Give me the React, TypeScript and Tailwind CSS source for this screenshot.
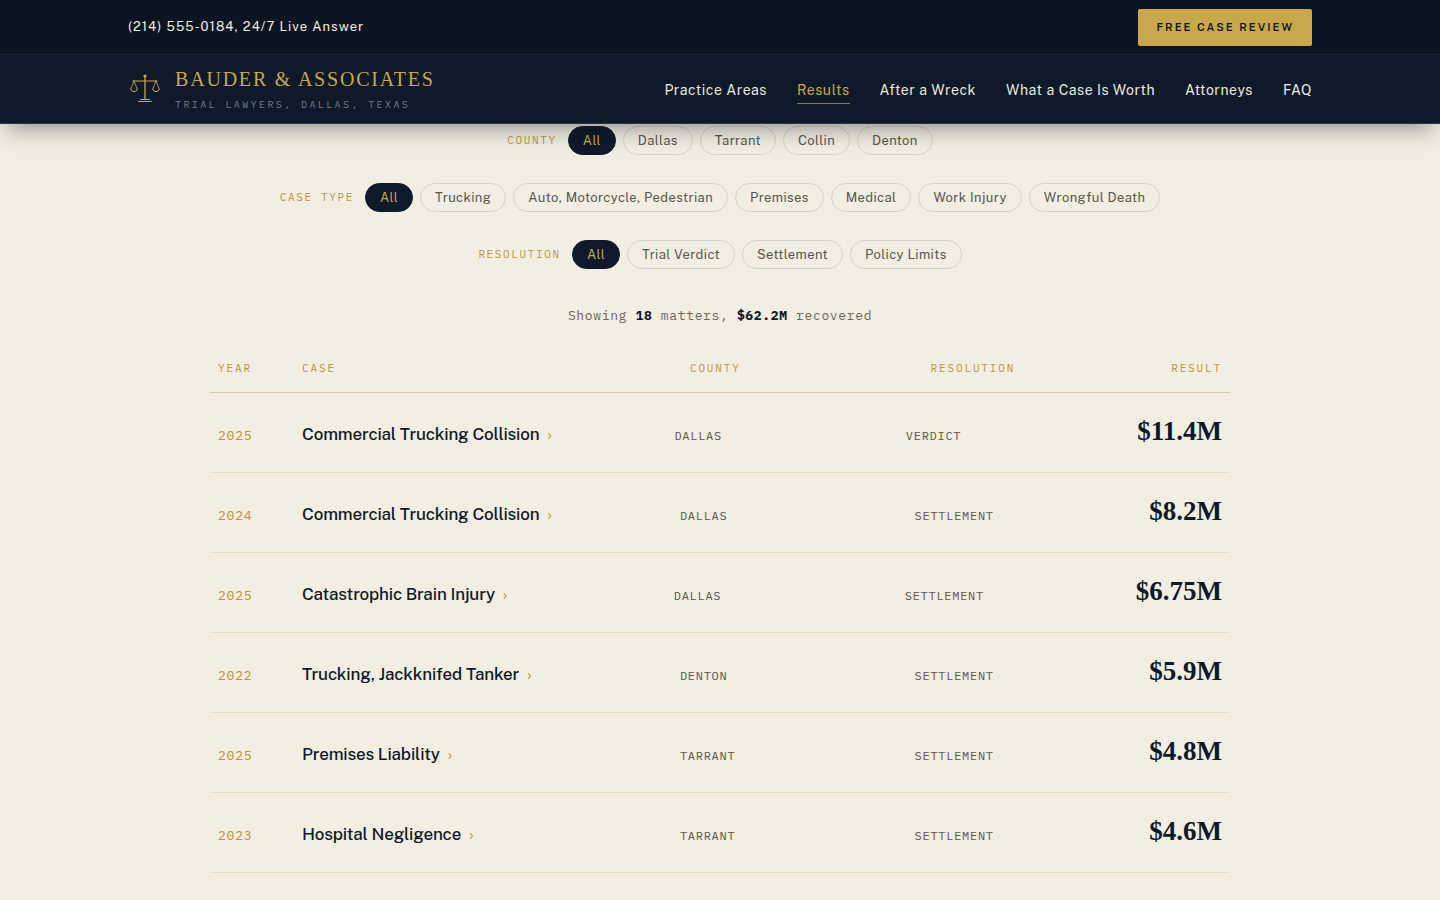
import { useState } from "react";

const NAV_ITEMS = ["Practice Areas", "Results", "After a Wreck", "What a Case Is Worth", "Attorneys", "FAQ"];

const FILTERS = [
  { label: "County",     options: ["All", "Dallas", "Tarrant", "Collin", "Denton"] },
  { label: "Case Type",  options: ["All", "Trucking", "Auto, Motorcycle, Pedestrian", "Premises", "Medical", "Work Injury", "Wrongful Death"] },
  { label: "Resolution", options: ["All", "Trial Verdict", "Settlement", "Policy Limits"] },
];

const RESULTS = [
  { year: "2025", name: "Commercial Trucking Collision", county: "Dallas",  resolution: "Verdict",    amount: "$11.4M" },
  { year: "2024", name: "Commercial Trucking Collision", county: "Dallas",  resolution: "Settlement", amount: "$8.2M" },
  { year: "2025", name: "Catastrophic Brain Injury",     county: "Dallas",  resolution: "Settlement", amount: "$6.75M" },
  { year: "2022", name: "Trucking, Jackknifed Tanker",   county: "Denton",  resolution: "Settlement", amount: "$5.9M" },
  { year: "2025", name: "Premises Liability",            county: "Tarrant", resolution: "Settlement", amount: "$4.8M" },
  { year: "2023", name: "Hospital Negligence",           county: "Tarrant", resolution: "Settlement", amount: "$4.6M" },
  { year: "2024", name: "Wrongful Death",                county: "Collin",  resolution: "Settlement", amount: "$4.2M" },
];

const MONO = "font-['IBM_Plex_Mono','Liberation_Mono',monospace]";
const SERIF = "font-['Liberation_Serif',serif]";
const ROW = "grid grid-cols-[60px_1.68fr_1fr_1fr_auto] gap-x-6 px-2";

function ScalesIcon() {
  return (
    <svg viewBox="0 0 34 34" fill="none" stroke="currentColor" strokeWidth="1" strokeLinecap="round" strokeLinejoin="round" className="w-[34px] h-[34px] shrink-0 text-[#c9a84c]" aria-hidden="true">
      <circle cx="17" cy="4" r="1.6" fill="currentColor" stroke="none" />
      <path d="M17 4v23.5" strokeWidth="1.3" />
      <path d="M5 9h24" strokeWidth="1.2" />
      <path d="M6 9l-3.2 8M6 9l3.2 8M28 9l-3.2 8M28 9l3.2 8" strokeWidth="0.8" />
      <path d="M2.6 17a3.5 3.5 0 0 0 6.8 0M24.6 17a3.5 3.5 0 0 0 6.8 0" />
      <path d="M12.5 27.5h9M10.5 29.5h13" />
    </svg>
  );
}

function Header() {
  return (
    <header className="sticky top-0 z-10 bg-[#0e1929] shadow-[0_8px_24px_-6px_rgba(10,20,32,0.5)]">
      <div className="bg-[#0b1522] border-b border-[#1b2730]">
        <div className="max-w-[1280px] mx-auto px-12 h-[54px] flex items-center justify-between">
          <a href="tel:+12145550184" className="text-[13px] tracking-[0.08em] text-[#f2eee1]">
            (214) 555-0184, 24/7 Live Answer
          </a>
          <button type="button" className="bg-[#c9a84c] text-[#0b1522] text-[11px] leading-[15px] font-semibold uppercase tracking-[0.18em] px-[18px] py-[11px] rounded-xs">
            Free Case Review
          </button>
        </div>
      </div>
      <div className="border-b border-[#2c3537]">
        <div className="max-w-[1280px] mx-auto px-12 h-[68px] flex items-center justify-between">
          <a href="#home" className="flex items-center gap-[13px]">
            <ScalesIcon />
            <span className="flex flex-col gap-1">
              <span className={`${SERIF} text-xl leading-7 uppercase tracking-[0.09em] text-[#c9a84c]`}>Bauder &amp; Associates</span>
              <span className={`${MONO} text-[10px] leading-4 uppercase tracking-[0.24em] text-[#727c87]`}>Trial Lawyers, Dallas, Texas</span>
            </span>
          </a>
          <nav className="flex items-center gap-[30px]">
            {NAV_ITEMS.map((item) => (
              <a
                key={item}
                href="#results"
                className={`text-sm tracking-[0.04em] pt-[5px] pb-[3px] border-b ${item === "Results" ? "text-[#c9a84c] border-[#8f7b40]" : "text-[#ece8dd] border-transparent"}`}
              >
                {item}
              </a>
            ))}
          </nav>
        </div>
      </div>
    </header>
  );
}

function FilterRow({ label, options }: { label: string; options: string[] }) {
  const [active, setActive] = useState("All");

  return (
    <div role="group" aria-label={label} className="flex flex-wrap items-center justify-center gap-[7px]">
      <span className={`${MONO} text-[11px] uppercase tracking-[0.15em] text-[#b8963e] mr-1`}>{label}</span>
      {options.map((option) => (
        <button
          key={option}
          type="button"
          aria-pressed={option === active}
          onClick={() => setActive(option)}
          className={`text-[13px] leading-[15px] tracking-[0.03em] px-3.5 py-1.5 rounded-full border ${
            option === active ? "bg-[#0e1929] border-[#0e1929] text-[#c9a84c]" : "border-[#d6d2c6] text-[#5a564c]"
          }`}
        >
          {option}
        </button>
      ))}
    </div>
  );
}

function ResultsTable() {
  return (
    <table className="block mt-[30px]">
      <thead className="block">
        <tr className={`${ROW} ${MONO} pt-1 pb-4 text-[11px] leading-4 uppercase tracking-[0.17em] text-[#b8963e] text-left border-b border-[#d9cb9d]`}>
          <th scope="col" className="font-normal">Year</th>
          <th scope="col" className="font-normal">Case</th>
          <th scope="col" className="font-normal">County</th>
          <th scope="col" className="font-normal">Resolution</th>
          <th scope="col" className="font-normal text-right">Result</th>
        </tr>
      </thead>
      <tbody className="block">
        {RESULTS.map((row, i) => (
          <tr key={i} className={`${ROW} h-20 items-baseline pt-5 border-b border-[#e6dfc4]`}>
            <td className={`${MONO} text-[13px] tracking-[0.06em] text-[#b8963e]`}>{row.year}</td>
            <td className="text-[17px] tracking-[-0.01em] font-medium text-[#0e1929]">
              <a href="#case">
                {row.name}
                <span className="ml-2 font-['Open_Sans',sans-serif] text-sm text-[#b8963e]">›</span>
              </a>
            </td>
            <td className={`${MONO} text-xs uppercase tracking-[0.06em] text-[#5a564c]`}>{row.county}</td>
            <td className={`${MONO} text-xs uppercase tracking-[0.06em] text-[#5a564c]`}>{row.resolution}</td>
            <td className={`${SERIF} text-[27px] leading-9 font-bold text-right text-[#0e1929]`}>{row.amount}</td>
          </tr>
        ))}
      </tbody>
    </table>
  );
}

export default function App() {
  return (
    <div className="min-h-screen bg-[#f2eee1] font-['Public_Sans','Inter',sans-serif]">
      <Header />
      <main className="max-w-[1068px] mx-auto px-6 pt-0.5">
        <div className="flex flex-col gap-7">
          {FILTERS.map((filter) => (
            <FilterRow key={filter.label} label={filter.label} options={filter.options} />
          ))}
        </div>
        <p className={`${MONO} mt-[37px] text-center text-[13px] leading-5 tracking-[0.05em] text-[#6b675c]`}>
          Showing <strong className="text-[#0e1929]">18</strong> matters, <strong className="text-[#0e1929]">$62.2M</strong> recovered
        </p>
        <ResultsTable />
      </main>
    </div>
  );
}
